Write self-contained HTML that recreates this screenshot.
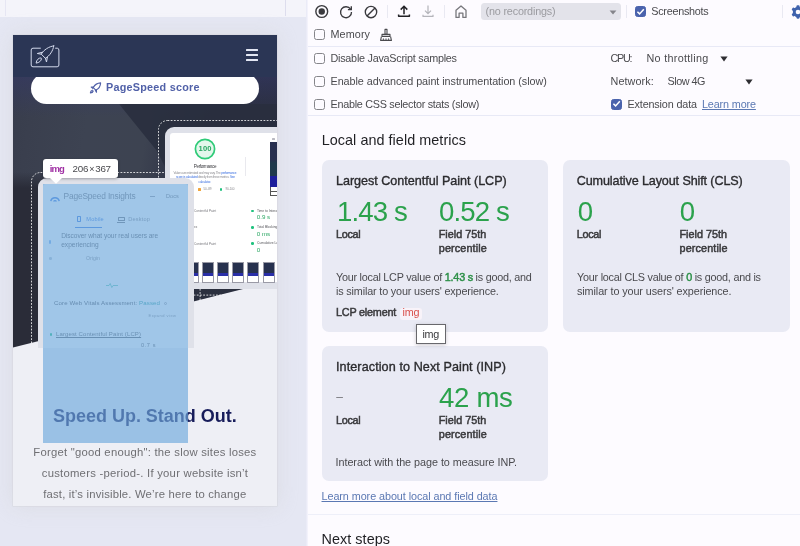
<!DOCTYPE html>
<html lang="en">
<head>
<meta charset="utf-8">
<title>Performance panel – Local and field metrics</title>
<style>
*{box-sizing:border-box;margin:0;padding:0}
html,body{width:800px;height:546px;overflow:hidden}
body{position:relative;background:#fdfbff;font-family:"Liberation Sans",sans-serif;font-size:10.8px;color:#4a4a4e;line-height:1}
.a,.t,svg{position:absolute}
#root{position:absolute;left:0;top:0;width:800px;height:546px;overflow:hidden;will-change:transform;transform:translateZ(0)}
.t{white-space:nowrap;line-height:1;height:1em}
#left{left:0;top:0;width:306.3px;height:546px;background:#e5e7f3;overflow:hidden}
#dev{left:13px;top:35px;width:264px;height:470.75px;background:#eeeff5;overflow:hidden}
#dev .t{margin-left:-13px;margin-top:-35px}
.cb{position:absolute;width:11px;height:11px;border:1.3px solid #85858a;border-radius:2.5px;background:#fdfbff}
.cb.on{background:#4a63ad;border-color:#4a63ad}
.hl{position:absolute;height:1px;background:#e8e9f6}
.vd{position:absolute;width:1px;background:#e8e8f1}
.card{position:absolute;background:#e9eaf4;border-radius:7px}
.ct{-webkit-text-stroke:.35px #2b2b2e}
.lb{-webkit-text-stroke:.5px #3a3a3d}
.g{color:#2c8f47;-webkit-text-stroke:.45px #2c8f47}
.u{text-decoration:underline;text-underline-offset:.6px;text-decoration-thickness:.9px}
</style>
</head>
<body>
<div id="root">

<div class="a" id="left">

<div class="a" style="left:0.00px;top:0.00px;width:307.00px;height:17.00px;background:#f4f4fa"></div>
<div class="a" style="left:5.00px;top:0.00px;width:1.00px;height:16.00px;background:#e6e6f3"></div>
<div class="a" style="left:285.00px;top:0.00px;width:1.00px;height:16.00px;background:#dddded"></div>
<div class="a" style="left:13.00px;top:35.00px;width:264.00px;height:470.75px;box-shadow:0 0 0 .5px rgba(214,214,219,.9),0 0 20px rgba(204,204,204,.42)"></div>
<div class="a" id="dev">

<div class="a" style="left:0.00px;top:0.00px;width:264.00px;height:320.00px;background:linear-gradient(100deg,#373c4b 0%,#3a3f4e 10%,#3d4352 28%,#3d4351 47%,#33384a 56%,#2b3040 66%,#2a2e3c 100%);clip-path:polygon(0 0,264px 0,264px 245.5px,0 312px)"></div>
<div class="a" style="left:0.00px;top:42.00px;width:264.00px;height:40.00px;background:linear-gradient(180deg,rgba(52,56,104,.55),rgba(52,56,104,0))"></div>
<div class="a" style="left:0.00px;top:137.00px;width:30.00px;height:180.00px;background:linear-gradient(180deg,rgba(42,44,56,0) 0,rgba(42,44,56,1) 16px)"></div>
<div class="a" style="left:106.00px;top:42.00px;width:160.00px;height:90.00px;background:#2a2f3f;clip-path:polygon(0 27px,100% 27px,100% 90px,46px 90px,38px 74px);filter:blur(2.5px);opacity:.9"></div>
<svg style="left:145.30px;top:85.40px" width="150" height="185" viewBox="0 0 150 185"><rect x=".5" y=".5" width="170" height="174.6" rx="9" fill="none" stroke="#fff" stroke-opacity=".88" stroke-width=".9" stroke-dasharray="1.8 1.4"/></svg>
<svg style="left:17.60px;top:136.90px" width="180" height="190" viewBox="0 0 180 190"><rect x=".5" y=".5" width="168.6" height="220" rx="9" fill="none" stroke="#fff" stroke-opacity=".88" stroke-width=".9" stroke-dasharray="1.8 1.4"/></svg>
<div class="a" style="left:0.00px;top:0.00px;width:264.00px;height:470.00px;background:#eeeff5;clip-path:polygon(0 312.6px,264px 246.1px,264px 470px,0 470px)"></div>
<div class="a" style="left:152.00px;top:92.00px;width:130.00px;height:162.00px;background:#dfe1e9;border-radius:9px"></div>
<div class="a" style="left:157.20px;top:97.70px;width:120.00px;height:149.60px;background:#fff;border-radius:3px"></div>
<svg style="left:181.10px;top:102.85px" width="22" height="22" viewBox="0 0 22 22"><circle cx="11" cy="11" r="9.6" fill="#e4f7ec" stroke="#2fcb78" stroke-width="1.7"/></svg>
<div class="t" style="left:198.60px;top:145.17px;font-size:7.6px;font-weight:700;color:#2aa763;letter-spacing:0.164px;font-family:"Liberation Mono",monospace;">100</div>
<div class="t" style="left:193.75px;top:164.71px;font-size:4.6px;color:#3c3c40;letter-spacing:-0.356px;">Performance</div>
<div class="t" style="left:173.50px;top:171.68px;font-size:3.1px;color:#8d8d92;letter-spacing:-0.210px;">Values are estimated and may vary. The <span style="color:#3b6fe0">performance</span></div>
<div class="t" style="left:176.00px;top:176.18px;font-size:3.1px;color:#8d8d92;letter-spacing:-0.209px;"><span style="color:#3b6fe0">score is calculated</span> directly from these metrics. <span style="color:#3b6fe0">See</span></div>
<div class="t" style="left:198.50px;top:180.68px;font-size:3.1px;color:#3b6fe0;letter-spacing:-0.144px;">calculator.</div>
<div class="a" style="left:185.10px;top:153.30px;width:2.60px;height:2.60px;background:#f0a53c;border-radius:.5px"></div>
<div class="t" style="left:203.50px;top:187.98px;font-size:3.1px;color:#8d8d92;letter-spacing:-0.152px;">50–89</div>
<div class="a" style="left:206.60px;top:153.30px;width:2.60px;height:2.60px;background:#1fc27e;border-radius:50%"></div>
<div class="t" style="left:225.50px;top:187.98px;font-size:3.1px;color:#8d8d92;letter-spacing:-0.266px;">90–100</div>
<div class="a" style="left:232.20px;top:122.00px;width:0.60px;height:19.00px;background:#e9e9ee"></div>
<div class="a" style="left:256.90px;top:106.50px;width:8.00px;height:54.50px;background:#fff;border:.6px solid #555"></div>
<div class="a" style="left:256.90px;top:156.00px;width:8.00px;height:1.00px;background:#555"></div>
<div class="a" style="left:256.90px;top:106.50px;width:8.00px;height:35.00px;background:linear-gradient(#28304f 0,#28304f 50%,#1f3a4c 60%,#1f3a4c 100%)"></div>
<div class="a" style="left:256.90px;top:141.30px;width:8.00px;height:10.50px;background:#1d1f9c"></div>
<div class="a" style="left:258.50px;top:102.50px;width:3.00px;height:2.00px;background:#b9b9c0;border-radius:.5px"></div>
<div class="a" style="left:238.40px;top:174.70px;width:2.60px;height:2.60px;background:#1fc27e;border-radius:50%"></div>
<div class="t" style="left:257.00px;top:209.61px;font-size:3.3px;color:#55555a;">Time to Interactive</div>
<div class="t" style="left:256.80px;top:214.35px;font-size:6.2px;color:#2aa763;">0.9 s</div>
<div class="t" style="left:194.00px;top:209.78px;font-size:3.1px;color:#77777c;">Contentful Paint</div>
<div class="a" style="left:238.40px;top:191.20px;width:2.60px;height:2.60px;background:#1fc27e;border-radius:50%"></div>
<div class="t" style="left:257.00px;top:226.11px;font-size:3.3px;color:#55555a;">Total Blocking Time</div>
<div class="t" style="left:256.80px;top:230.85px;font-size:6.2px;color:#2aa763;">0 ms</div>
<div class="t" style="left:194.00px;top:226.28px;font-size:3.1px;color:#77777c;">ex</div>
<div class="a" style="left:238.40px;top:207.45px;width:2.60px;height:2.60px;background:#1fc27e;border-radius:50%"></div>
<div class="t" style="left:257.00px;top:242.36px;font-size:3.3px;color:#55555a;">Cumulative Layout Shift</div>
<div class="t" style="left:256.80px;top:247.10px;font-size:6.2px;color:#2aa763;">0</div>
<div class="t" style="left:194.00px;top:242.53px;font-size:3.1px;color:#77777c;">Contentful Paint</div>
<div class="a" style="left:177.00px;top:226.60px;width:9.00px;height:21.20px;background:linear-gradient(#27314e 0,#27314e 55%,#2a2fa8 55%,#2a2fa8 68%,#fff 68%);border:.5px solid #9a9aa6"></div>
<div class="a" style="left:189.00px;top:226.60px;width:12.20px;height:21.20px;background:linear-gradient(#27314e 0,#27314e 55%,#2a2fa8 55%,#2a2fa8 68%,#fff 68%);border:.5px solid #9a9aa6"></div>
<div class="a" style="left:204.00px;top:226.60px;width:12.20px;height:21.20px;background:linear-gradient(#27314e 0,#27314e 55%,#2a2fa8 55%,#2a2fa8 68%,#fff 68%);border:.5px solid #9a9aa6"></div>
<div class="a" style="left:219.20px;top:226.60px;width:12.20px;height:21.20px;background:linear-gradient(#27314e 0,#27314e 55%,#2a2fa8 55%,#2a2fa8 68%,#fff 68%);border:.5px solid #9a9aa6"></div>
<div class="a" style="left:234.30px;top:226.60px;width:12.20px;height:21.20px;background:linear-gradient(#27314e 0,#27314e 55%,#2a2fa8 55%,#2a2fa8 68%,#fff 68%);border:.5px solid #9a9aa6"></div>
<div class="a" style="left:249.50px;top:226.60px;width:12.20px;height:21.20px;background:linear-gradient(#27314e 0,#27314e 55%,#2a2fa8 55%,#2a2fa8 68%,#fff 68%);border:.5px solid #9a9aa6"></div>
<div class="a" style="left:24.50px;top:143.25px;width:156.00px;height:169.50px;background:#dfe1e9;border-radius:9px 9px 0 0"></div>
<div class="a" style="left:30.00px;top:149.00px;width:145.00px;height:163.75px;background:#fff;border-radius:3px 3px 0 0"></div>
<svg style="left:37.00px;top:158.50px" width="10" height="8" viewBox="0 0 10 8"><path d="M.8 7.2A4.3 4.3 0 0 1 9.2 7.2" fill="none" stroke="#3b7be0" stroke-width="1.5"/><path d="M3 7.4A2.1 2.1 0 0 1 7 7.4z" fill="#3b7be0"/></svg>
<div class="t" style="left:63.60px;top:192.19px;font-size:8.4px;color:#74747a;letter-spacing:-0.175px;">PageSpeed Insights</div>
<div class="t" style="left:166.00px;top:194.26px;font-size:5.6px;color:#74747a;">Docs</div>
<div class="a" style="left:137.00px;top:161.00px;width:4.50px;height:1.00px;background:#9a9aa2"></div>
<div class="a" style="left:64.20px;top:180.80px;width:3.60px;height:6.50px;border:.7px solid #3b7be0;border-radius:.8px"></div>
<div class="t" style="left:86.30px;top:217.26px;font-size:5.6px;color:#3b7be0;letter-spacing:0.183px;">Mobile</div>
<div class="a" style="left:62.00px;top:191.70px;width:27.30px;height:1.00px;background:#3b7be0"></div>
<div class="a" style="left:105.00px;top:181.80px;width:6.60px;height:4.60px;border:.7px solid #74747a;border-radius:.6px"></div>
<div class="a" style="left:104.40px;top:187.00px;width:7.80px;height:0.80px;background:#74747a"></div>
<div class="t" style="left:128.20px;top:217.26px;font-size:5.6px;color:#8a8a90;letter-spacing:0.211px;">Desktop</div>
<div class="t" style="left:61.20px;top:232.61px;font-size:6.6px;color:#5f6066;letter-spacing:-0.038px;">Discover what your real users are</div>
<div class="t" style="left:61.20px;top:242.01px;font-size:6.6px;color:#5f6066;letter-spacing:0.010px;">experiencing</div>
<div class="a" style="left:35.80px;top:204.50px;width:2.60px;height:4.20px;background:#7fb0ee;border-radius:1px"></div>
<div class="a" style="left:36.00px;top:222.00px;width:2.60px;height:2.60px;background:#b9c3d0;border-radius:50%"></div>
<div class="t" style="left:86.00px;top:256.20px;font-size:5.2px;color:#8a8a90;letter-spacing:0.031px;">Origin</div>
<svg style="left:93.00px;top:248.00px" width="12" height="5" viewBox="0 0 12 5"><path d="M0 2.5h3l1.2-2 1.6 4 1.3-2H12" fill="none" stroke="#35b9a0" stroke-width=".7"/></svg>
<div class="t" style="left:54.00px;top:299.84px;font-size:6.1px;color:#4f5058;letter-spacing:0.119px;">Core Web Vitals Assessment: <span style="color:#2aa0a0">Passed</span></div>
<div class="a" style="left:150.50px;top:266.50px;width:3.00px;height:3.00px;border:.5px solid #a0a0a8;border-radius:50%"></div>
<div class="t" style="left:148.50px;top:313.81px;font-size:4px;color:#8a8a90;letter-spacing:0.481px;">Expand view</div>
<div class="a" style="left:37.00px;top:298.30px;width:2.40px;height:2.40px;background:#1fc27e;border-radius:50%"></div>
<div class="t u" style="left:56.00px;top:331.32px;font-size:6px;color:#5f6066;letter-spacing:0.113px;">Largest Contentful Paint (LCP)</div>
<div class="t" style="left:141.00px;top:343.06px;font-size:5.6px;color:#5f6066;letter-spacing:0.590px;">0.7 s</div>
<div class="a" style="left:18.00px;top:37.50px;width:228.00px;height:31.30px;background:#fff;border-radius:15.6px"></div>
<div class="t" style="left:106.00px;top:81.76px;font-size:10.8px;font-weight:700;color:#5161a8;letter-spacing:0.248px;">PageSpeed score</div>
<svg style="left:76.00px;top:47.30px" width="13" height="12" viewBox="0 0 13 12" fill="none" stroke="#5161a8" stroke-width="1.15" stroke-linecap="round" stroke-linejoin="round"><path d="M11.6 .9C8.6 1 5.8 2.8 4.2 5.6L6.8 8.2C9.7 6.7 11.5 3.9 11.6 .9z"/><path d="M4.6 5L2.2 5 3.8 6.4M7.4 7.8L7.5 10.2 6.4 8.4"/><path d="M3.4 8.2C2.2 8.4 1.5 9.5 1.4 10.9 2.8 10.8 3.9 10.1 4.2 9"/></svg>
<div class="a" style="left:0.00px;top:0.00px;width:264.00px;height:42.25px;background:#2b3655"></div>
<div class="a" style="left:233.00px;top:14.00px;width:12.00px;height:1.80px;background:#e3e7f3;border-radius:.5px"></div>
<div class="a" style="left:233.00px;top:19.00px;width:12.00px;height:1.80px;background:#e3e7f3;border-radius:.5px"></div>
<div class="a" style="left:233.00px;top:24.00px;width:12.00px;height:1.80px;background:#e3e7f3;border-radius:.5px"></div>
<svg style="left:16.00px;top:9.00px" width="32" height="26" viewBox="0 0 32 26" fill="none" stroke="#d3d9ec" stroke-linecap="round" stroke-linejoin="round" stroke-width="1"><path d="M11.4 4.2H4Q2.2 4.2 2.2 6V21Q2.2 22.8 4 22.8H28.1Q29.9 22.8 29.9 21V6Q29.9 4.4 28.3 4.2H26.6"/><path d="M24.75 1.9C20 2.4 14.5 6 12.3 10.2L16.4 14.3C20.6 12 24.2 6.6 24.75 1.9z"/><path d="M13.6 8.2L8.3 9.5 12.3 10.2M18.4 13.1L17.5 18 16.4 14.3"/><path d="M11.8 13.9C9.6 13.7 7.4 16 7.1 19.1 10 18.8 12.5 16.9 12.5 14.7"/></svg>
<div class="t" style="left:53.00px;top:407.06px;font-size:18px;font-weight:700;color:#171c5a;letter-spacing:-0.014px;">Speed Up. Stand Out.</div>
<div class="t" style="left:33.25px;top:446.83px;font-size:11.3px;color:#6f6f73;letter-spacing:0.235px;">Forget "good enough": the slow sites loses</div>
<div class="t" style="left:41.75px;top:468.03px;font-size:11.3px;color:#6f6f73;letter-spacing:0.243px;">customers -period-. If your website isn’t</div>
<div class="t" style="left:43.25px;top:488.93px;font-size:11.3px;color:#6f6f73;letter-spacing:0.183px;">fast, it’s invisible. We’re here to change</div>
</div>

<div class="a" style="left:43.00px;top:184.00px;width:145.00px;height:259.00px;background:rgba(111,168,220,.66)"></div>
<div class="a" style="left:43.20px;top:159.10px;width:74.80px;height:19.20px;background:#fff;border-radius:3px;box-shadow:0 1px 3px rgba(0,0,0,.3)"></div>
<svg style="left:50px;top:178px" width="12" height="6" viewBox="0 0 12 6"><path d="M0 0h12L6 5.7z" fill="#fff"/></svg>
<div class="t" style="left:49.70px;top:164.06px;font-size:9.5px;font-weight:700;color:#a030a4;letter-spacing:-0.845px;">img</div>
<div class="t" style="left:72.50px;top:163.80px;font-size:9.8px;color:#4a4a4e;letter-spacing:-0.228px;word-spacing:-1.5px;">206 <span style="font-size:9px">×</span> 367</div>
</div>

<div class="a" style="left:306.00px;top:0.00px;width:1.60px;height:546.00px;background:linear-gradient(90deg,#e7e8f5,#f6f5fd)"></div>
<div class="a" style="left:480.60px;top:2.50px;width:140.60px;height:17.50px;background:#e3e3ea;border-radius:3.5px"></div>
<div class="t" style="left:485.60px;top:5.61px;font-size:10.8px;color:#9b9ba0;letter-spacing:-0.188px;">(no recordings)</div>
<div class="a" style="left:387.00px;top:4.50px;width:1.00px;height:13.00px;background:#e9e9f2"></div>
<div class="a" style="left:444.00px;top:4.50px;width:1.00px;height:13.00px;background:#e9e9f2"></div>
<div class="a" style="left:626.00px;top:4.50px;width:1.00px;height:13.00px;background:#e9e9f2"></div>
<div class="a" style="left:782.00px;top:4.50px;width:1.00px;height:13.00px;background:#e9e9f2"></div>
<div class="cb on" style="left:635px;top:6px"></div>
<div class="t" style="left:651.25px;top:5.96px;font-size:10.8px;letter-spacing:-0.252px;">Screenshots</div>
<div class="cb" style="left:314.2px;top:28.8px"></div>
<div class="t" style="left:330.50px;top:29.06px;font-size:10.8px;letter-spacing:0.100px;">Memory</div>
<div class="hl" style="left:308px;top:46px;width:492px"></div>
<div class="cb" style="left:314.2px;top:52.8px"></div>
<div class="t" style="left:330.50px;top:52.86px;font-size:10.8px;letter-spacing:-0.245px;">Disable JavaScript samples</div>
<div class="cb" style="left:314.2px;top:75.8px"></div>
<div class="t" style="left:330.50px;top:75.86px;font-size:10.8px;letter-spacing:-0.050px;">Enable advanced paint instrumentation (slow)</div>
<div class="cb" style="left:314.2px;top:98.7px"></div>
<div class="t" style="left:330.50px;top:98.76px;font-size:10.8px;letter-spacing:-0.272px;">Enable CSS selector stats (slow)</div>
<div class="t" style="left:610.50px;top:52.86px;font-size:10.8px;letter-spacing:-1.266px;">CPU:</div>
<div class="t" style="left:646.50px;top:52.86px;font-size:10.8px;letter-spacing:0.294px;">No throttling</div>
<div class="t" style="left:610.50px;top:75.86px;font-size:10.8px;letter-spacing:0.092px;">Network:</div>
<div class="t" style="left:667.50px;top:75.86px;font-size:10.8px;letter-spacing:-0.469px;">Slow 4G</div>
<div class="cb on" style="left:611px;top:98.7px"></div>
<div class="t" style="left:627.50px;top:98.76px;font-size:10.8px;letter-spacing:-0.149px;">Extension data</div>
<div class="t u" style="left:702.00px;top:98.76px;font-size:10.8px;color:#5b78b3;letter-spacing:-0.135px;">Learn more</div>
<div class="hl" style="left:308px;top:115.3px;width:492px"></div>
<svg style="left:314px;top:4px" width="16" height="16" viewBox="0 0 16 16"><circle cx="7.75" cy="7.5" r="5.9" fill="none" stroke="#3a3a3e" stroke-width="1.4"/><circle cx="7.75" cy="7.5" r="3.2" fill="#3a3a3e"/></svg>
<svg style="left:338.4px;top:3.5px" width="16" height="16" viewBox="0 0 16 16" fill="none" stroke="#3a3a3e" stroke-width="1.35"><path d="M12.6 5.2A5.5 5.5 0 1 0 13.5 8"/><path d="M13.3 2.2V5.6H9.9" stroke-linejoin="miter"/></svg>
<svg style="left:362.9px;top:3.5px" width="16" height="16" viewBox="0 0 16 16" fill="none" stroke="#3a3a3e" stroke-width="1.35"><circle cx="8" cy="8" r="5.7"/><path d="M4 12L12 4"/></svg>
<svg style="left:395.75px;top:3px" width="16" height="16" viewBox="0 0 16 16" fill="none" stroke="#222226" stroke-width="1.5"><path d="M8 11.2V3.6M4.7 6.6L8 3.3L11.3 6.6"/><path d="M2.6 11.5V13.2H13.4V11.5" stroke-linejoin="round"/></svg>
<svg style="left:420px;top:3px" width="16" height="16" viewBox="0 0 16 16" fill="none" stroke="#b4b4ba" stroke-width="1.2"><path d="M8 2.6V10.4M5 7.6L8 10.6L11 7.6"/><path d="M3 11.8V13.4H13V11.8" stroke-linejoin="round"/></svg>
<svg style="left:452.6px;top:3px" width="16" height="16" viewBox="0 0 16 16" fill="none" stroke="#77777c" stroke-width="1.3" stroke-linejoin="round"><path d="M3 14.4V7.2L8 3L13 7.2V14.4H9.9V10.2H6.1V14.4z"/></svg>
<svg style="left:608.5px;top:9.5px" width="8" height="5" viewBox="0 0 8 5"><path d="M.6 .5h6.8L4 4.6z" fill="#85858b"/></svg>
<svg style="left:635px;top:6px" width="11" height="11" viewBox="0 0 11 11"><path d="M2.4 5.7L4.6 7.9L8.8 3.2" fill="none" stroke="#fff" stroke-width="1.5"/></svg>
<svg style="left:611px;top:98.4px" width="11" height="11" viewBox="0 0 11 11"><path d="M2.4 5.7L4.6 7.9L8.8 3.2" fill="none" stroke="#fff" stroke-width="1.5"/></svg>
<svg style="left:719.5px;top:56px" width="8" height="6" viewBox="0 0 8 6"><path d="M.4 .4h7.2L4 5.4z" fill="#2e2e32"/></svg>
<svg style="left:744.5px;top:79px" width="8" height="6" viewBox="0 0 8 6"><path d="M.4 .4h7.2L4 5.4z" fill="#2e2e32"/></svg>
<svg style="left:379px;top:27.5px" width="14" height="14" viewBox="0 0 14 14" fill="none" stroke="#4a4a4e" stroke-width="1.1" stroke-linejoin="round"><path d="M6 1.4h2V6.2H6z"/><path d="M3 6.4H11V8.4H3z"/><path d="M2.4 8.6L1.6 12.4H12.4L11.6 8.6"/><path d="M4.4 10.4v2M7 10.4v2M9.6 10.4v2" stroke-width=".9"/></svg>
<svg style="left:789.6px;top:3.6px" width="16" height="16" viewBox="0 0 16 16"><g fill="#3f63ad"><circle cx="8" cy="8" r="5.2"/><g id="gt"><rect x="6.4" y="1.3" width="3.2" height="13.4" rx="1.1"/></g><rect x="6.4" y="1.3" width="3.2" height="13.4" rx="1.1" transform="rotate(60 8 8)"/><rect x="6.4" y="1.3" width="3.2" height="13.4" rx="1.1" transform="rotate(120 8 8)"/></g><circle cx="8" cy="8" r="2.3" fill="#fdfbff"/></svg>
<svg style="left:514.4px;top:172.8px" width="16" height="16" viewBox="0 0 16 16"><circle cx="8" cy="8" r="6" fill="none" stroke="#3a3a3e" stroke-width="1.15"/><text x="8" y="11.3" text-anchor="middle" font-family="Liberation Sans, sans-serif" font-size="9.4" fill="#3a3a3e">?</text></svg>
<div class="t" style="left:321.70px;top:133.41px;font-size:14.4px;color:#1f1f23;letter-spacing:0.048px;">Local and field metrics</div>
<div class="card" style="left:321.6px;top:160px;width:226.2px;height:171.5px"></div>
<div class="card" style="left:562.5px;top:160px;width:227.3px;height:171.5px"></div>
<div class="card" style="left:321.6px;top:346px;width:226.2px;height:135.2px"></div>
<div class="t ct" style="left:336.00px;top:175.03px;font-size:12.6px;color:#2b2b2e;letter-spacing:-0.026px;">Largest Contentful Paint (LCP)</div><div class="t" style="left:336.90px;top:198.34px;font-size:27.6px;color:#2ba24c;letter-spacing:-0.834px;">1.43 s</div><div class="t" style="left:438.90px;top:198.34px;font-size:27.6px;color:#2ba24c;letter-spacing:-0.834px;">0.52 s</div><div class="t lb" style="left:336.00px;top:228.86px;font-size:10.8px;color:#3a3a3d;letter-spacing:-0.266px;">Local</div><div class="t lb" style="left:438.75px;top:228.86px;font-size:10.8px;color:#3a3a3d;letter-spacing:0.009px;">Field 75th</div><div class="t lb" style="left:438.75px;top:242.76px;font-size:10.8px;color:#3a3a3d;letter-spacing:0.130px;">percentile</div>
<div class="t" style="left:336.00px;top:271.86px;font-size:10.8px;letter-spacing:-0.242px;">Your local LCP value of <span class="g">1.43 s</span> is good, and</div>
<div class="t" style="left:336.00px;top:285.61px;font-size:10.8px;letter-spacing:-0.154px;">is similar to your users' experience.</div>
<div class="t lb" style="left:336.00px;top:306.86px;font-size:10.8px;color:#3a3a3d;letter-spacing:-0.198px;">LCP element</div>
<div class="a" style="left:400.00px;top:307.50px;width:21.50px;height:12.50px;background:#f8f3f9;border-radius:3px"></div>
<div class="t" style="left:402.50px;top:306.86px;font-size:10.8px;color:#d9504c;letter-spacing:-0.203px;">img</div>
<div class="t ct" style="left:576.75px;top:175.03px;font-size:12.6px;color:#2b2b2e;letter-spacing:-0.121px;">Cumulative Layout Shift (CLS)</div><div class="t" style="left:577.65px;top:198.34px;font-size:27.6px;color:#2ba24c;">0</div><div class="t" style="left:679.65px;top:198.34px;font-size:27.6px;color:#2ba24c;">0</div><div class="t lb" style="left:576.75px;top:228.86px;font-size:10.8px;color:#3a3a3d;letter-spacing:-0.266px;">Local</div><div class="t lb" style="left:679.50px;top:228.86px;font-size:10.8px;color:#3a3a3d;letter-spacing:0.009px;">Field 75th</div><div class="t lb" style="left:679.50px;top:242.76px;font-size:10.8px;color:#3a3a3d;letter-spacing:0.130px;">percentile</div>
<div class="t" style="left:577.00px;top:271.86px;font-size:10.8px;letter-spacing:-0.237px;">Your local CLS value of <span class="g">0</span> is good, and is</div>
<div class="t" style="left:577.00px;top:285.61px;font-size:10.8px;letter-spacing:-0.090px;">similar to your users' experience.</div>
<div class="t ct" style="left:336.00px;top:361.03px;font-size:12.6px;color:#2b2b2e;letter-spacing:0.090px;">Interaction to Next Paint (INP)</div><div class="t" style="left:438.90px;top:384.34px;font-size:27.6px;color:#2ba24c;letter-spacing:-0.289px;">42 ms</div><div class="t lb" style="left:336.00px;top:414.86px;font-size:10.8px;color:#3a3a3d;letter-spacing:-0.266px;">Local</div><div class="t lb" style="left:438.75px;top:414.86px;font-size:10.8px;color:#3a3a3d;letter-spacing:0.009px;">Field 75th</div><div class="t lb" style="left:438.75px;top:428.76px;font-size:10.8px;color:#3a3a3d;letter-spacing:0.130px;">percentile</div>
<div class="t" style="left:336.25px;top:391.34px;font-size:12px;color:#77777c;">–</div>
<div class="t" style="left:335.50px;top:457.36px;font-size:10.8px;letter-spacing:-0.037px;">Interact with the page to measure INP.</div>
<div class="a" style="left:416.30px;top:324.00px;width:29.50px;height:20.00px;background:#fff;border:1px solid #68686c;box-shadow:0 1px 4px rgba(0,0,0,.2)"></div>
<div class="t" style="left:422.50px;top:328.86px;font-size:10.8px;color:#3a3a3d;letter-spacing:-0.328px;">img</div>
<div class="t u" style="left:321.50px;top:490.86px;font-size:10.8px;color:#5b78b3;letter-spacing:-0.063px;">Learn more about local and field data</div>
<div class="hl" style="left:308px;top:513.6px;width:492px;background:#eeeff9"></div>
<div class="t" style="left:321.50px;top:532.11px;font-size:14.4px;color:#1f1f23;letter-spacing:0.057px;">Next steps</div>
</div>
</body>
</html>
